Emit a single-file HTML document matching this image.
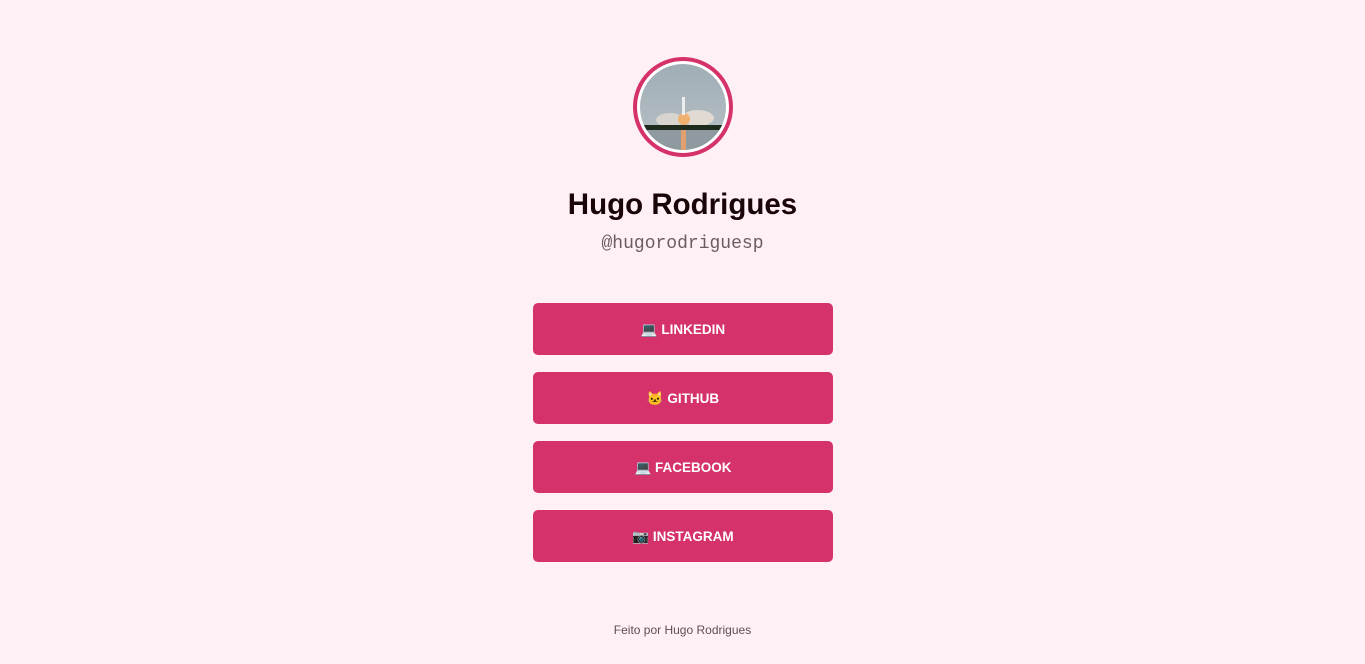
<!DOCTYPE html>
<html><head><meta charset="utf-8"><style>
html,body{margin:0;padding:0;background:#fff0f5;width:1365px;height:664px;overflow:hidden;font-family:"Liberation Sans",sans-serif}
.av{position:absolute;left:633px;top:57px;width:92px;height:92px;border:4px solid #d5326b;border-radius:50%;background:#fff;overflow:hidden}
.av svg{position:absolute;left:3px;top:3px;width:86px;height:86px;border-radius:50%}
h1{position:absolute;left:0;width:1365px;top:186px;margin:0;text-align:center;font-size:29.5px;font-weight:bold;color:#1a0508;line-height:38px}
.u{position:absolute;left:0;width:1365px;top:232px;text-align:center;font-family:"Liberation Mono",monospace;font-size:18px;color:#6b5c60;line-height:24px}
.b{position:absolute;left:533px;width:300px;height:52px;background:#d5326b;border-radius:5px;color:#fff;font-weight:bold;font-size:13.5px;text-align:center;line-height:53px}
.f{position:absolute;left:0;width:1365px;top:622px;text-align:center;font-size:12px;color:#5f4d52;line-height:16px}
</style></head><body>
<div class="av"><svg viewBox="0 0 86 86"><defs><linearGradient id="s" x1="0" y1="0" x2="0" y2="1"><stop offset="0" stop-color="#9fadb5"/><stop offset="1" stop-color="#b8c2c6"/></linearGradient></defs>
<rect width="86" height="86" fill="url(#s)"/>
<ellipse cx="30" cy="56" rx="14" ry="7" fill="#d8d4d0"/><ellipse cx="58" cy="54" rx="16" ry="8" fill="#e0dad2"/><ellipse cx="44" cy="55" rx="6" ry="6" fill="#f0b070"/>
<rect x="42" y="33" width="3" height="18" fill="#eee"/>
<rect x="0" y="61" width="86" height="5" fill="#1d2a1c"/>
<rect x="0" y="66" width="86" height="20" fill="#8e9aa0"/><rect x="41" y="66" width="5" height="20" fill="#e0a070"/></svg></div>
<h1>Hugo Rodrigues</h1>
<div class="u">@hugorodriguesp</div>
<div class="b" style="top:303px">💻 LINKEDIN</div>
<div class="b" style="top:372px">🐱 GITHUB</div>
<div class="b" style="top:441px">💻 FACEBOOK</div>
<div class="b" style="top:510px">📷 INSTAGRAM</div>
<div class="f">Feito por Hugo Rodrigues</div>
</body></html>
